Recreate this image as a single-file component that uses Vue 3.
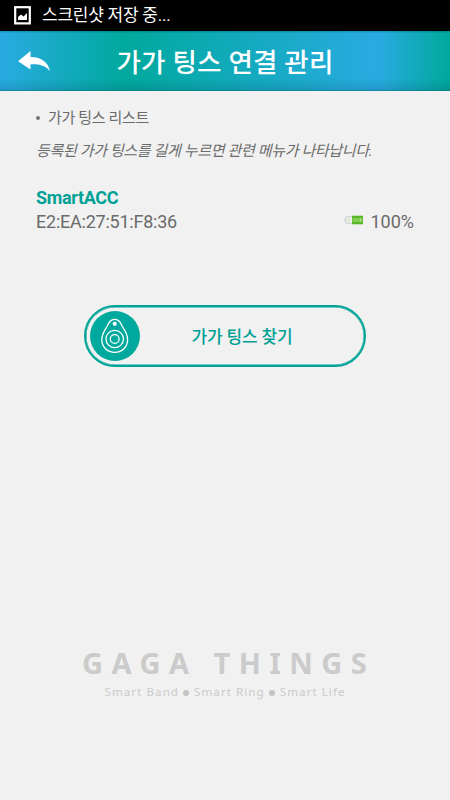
<script setup>
import { ref } from 'vue'

const devices = ref([
  { name: 'SmartACC', mac: 'E2:EA:27:51:F8:36', battery: 100 },
])
</script>

<template>
  <div class="screen">
    <div class="status-bar">
      <svg class="shot-icon" viewBox="0 0 18 19">
        <rect x="1.2" y="1.2" width="14.6" height="16.2" fill="none" stroke="#fff" stroke-width="2.2" />
        <path d="M4 14V11L7 8.5L9.5 10.5L13 7V14Z" fill="#fff" />
      </svg>
      <span class="status-text">스크린샷 저장 중...</span>
    </div>
    <header class="header">
      <button class="back">
        <svg viewBox="0 0 32 20">
          <path d="M0 10.2L12.5 0V6C22.5 6 30 10.5 32 20C27 14.4 21 13 12.5 13.4V18.6Z" fill="#fff" />
        </svg>
      </button>
      <h1 class="title">가가 팅스 연결 관리</h1>
    </header>
    <main class="content">
      <p class="list-title"><span class="bullet"></span>가가 팅스 리스트</p>
      <p class="hint">등록된 가가 팅스를 길게 누르면 관련 메뉴가 나타납니다.</p>
      <div v-for="d in devices" :key="d.mac" class="device">
        <div class="device-name">{{ d.name }}</div>
        <div class="device-row">
          <span class="mac">{{ d.mac }}</span>
          <svg class="battery" viewBox="0 0 20 10">
            <rect x="0" y="3.5" width="2" height="3" fill="#dadada" />
            <rect x="1.5" y="1" width="7" height="8" fill="#d6d8d4" />
            <rect x="2.5" y="2.5" width="5.5" height="5" fill="#eef2eb" />
            <rect x="4" y="4" width="1.5" height="2" fill="#b4dfa6" />
            <rect x="8" y="0.7" width="11" height="8.6" fill="#58b82a" />
            <rect x="8.5" y="3" width="10" height="4" fill="#83cd50" />
            <rect x="16" y="3" width="1" height="4" fill="#a7de80" />
          </svg>
          <span class="percent">{{ d.battery }}%</span>
        </div>
      </div>
      <button class="find">
        <span class="find-icon">
          <svg viewBox="0 0 50 50" fill="none" stroke="#fff">
            <path d="M24.7 8.3C20.5 8.3 19 11.5 17 15.5C14.5 20 11.8 23 11.8 28.4C11.8 36 17.3 41.3 24.7 41.3S37.6 36 37.6 28.4C37.6 23 34.9 20 32.4 15.5C30.4 11.5 28.9 8.3 24.7 8.3Z" stroke-width="1.3" />
            <circle cx="24.7" cy="28" r="8.7" stroke-width="1.3" />
            <circle cx="24.7" cy="28" r="4.4" stroke-width="1.3" />
            <circle cx="24.7" cy="12.8" r="2.1" fill="#fff" stroke="none" />
          </svg>
        </span>
        <span class="find-label">가가 팅스 찾기</span>
      </button>
    </main>
    <footer class="brand">
      <div class="brand-name">GAGA THINGS</div>
      <div class="brand-sub">
        <span>Smart Band</span><i class="dot"></i><span>Smart Ring</span><i class="dot"></i><span>Smart Life</span>
      </div>
    </footer>
  </div>
</template>

<style>
body {
  margin: 0;
  background: #f1f1f1;
}
</style>

<style scoped>
.screen {
  width: 450px;
  height: 800px;
  display: flex;
  flex-direction: column;
  overflow: hidden;
  background: #f1f1f1;
  color: #6b6b6b;
  font-family: Roboto, "Noto Sans CJK KR", sans-serif;
  white-space: nowrap;
}
.status-bar {
  height: 31px;
  box-sizing: border-box;
  padding-left: 14px;
  display: flex;
  align-items: center;
  background: #000;
}
.shot-icon {
  width: 18px;
  height: 19px;
  margin-right: 10px;
}
.status-text {
  color: #fff;
  font-size: 17px;
  line-height: 30px;
  letter-spacing: -0.25px;
  padding-bottom: 1px;
}
.header {
  height: 60px;
  box-sizing: border-box;
  display: flex;
  align-items: center;
  padding: 0 18px;
  background:
    linear-gradient(rgba(0, 70, 90, 0.3), transparent 4%, transparent 78%, rgba(0, 70, 90, 0.16) 97%, rgba(0, 70, 90, 0.4)),
    linear-gradient(90deg, #29abe2 0, #00a99d 125px, #29abe2 378px, #00a99d 448px);
}
.back {
  width: 32px;
  padding: 0;
  border: none;
  background: none;
}
.back svg {
  display: block;
  width: 32px;
  height: 20px;
}
.title {
  flex: 1;
  margin: 0 32px 0 0;
  padding-top: 4px;
  color: #fff;
  font-size: 26.5px;
  font-weight: 500;
  line-height: 60px;
  letter-spacing: 0.2px;
  text-align: center;
}
.content {
  display: flex;
  flex-direction: column;
  padding: 15px 36px 0;
}
.list-title {
  display: flex;
  align-items: center;
  margin: 0;
  font-size: 15px;
  line-height: 24px;
  letter-spacing: -0.35px;
}
.bullet {
  width: 4px;
  height: 4px;
  margin: 0 8px 1px 0;
  border-radius: 50%;
  background: #777;
}
.hint {
  margin: 9px 0 0;
  font-size: 15px;
  font-style: italic;
  line-height: 24px;
  letter-spacing: -0.35px;
}
.device {
  margin-top: 23px;
}
.device-name {
  color: #00a195;
  font-size: 18px;
  font-weight: 700;
  line-height: 23px;
  letter-spacing: -0.35px;
}
.device-row {
  display: flex;
  align-items: center;
  font-size: 18px;
  line-height: 25px;
}
.mac {
  flex: 1;
  letter-spacing: -0.23px;
}
.battery {
  width: 20px;
  height: 10px;
  margin: 0 6px 4px 0;
}
.find {
  width: 282px;
  height: 62px;
  margin: 71px auto 0 48px;
  padding: 0 0 0 4px;
  display: flex;
  align-items: center;
  border: 2px solid #00a598;
  border-radius: 31px;
  box-shadow: inset 0 0 0 0.5px #00a598;
  background: none;
  font-family: inherit;
}
.find-icon {
  width: 50px;
  height: 50px;
  border-radius: 50%;
  background: #00a99d;
}
.find-icon svg {
  display: block;
}
.find-label {
  flex: 1;
  padding: 2px 20px 0 0;
  color: #00a195;
  font-size: 17px;
  font-weight: 500;
  line-height: 24px;
  letter-spacing: -0.15px;
  text-align: center;
}
.brand {
  margin: auto 0 99px;
  padding-left: 82px;
  color: #cbcbcb;
  font-family: "Noto Sans", sans-serif;
}
.brand-name {
  font-size: 29px;
  font-weight: 700;
  line-height: 36px;
  letter-spacing: 8.5px;
}
.brand-sub {
  display: flex;
  align-items: center;
  padding-left: 22.5px;
  margin-top: 2px;
  font-size: 11.6px;
  line-height: 18px;
  letter-spacing: 1.05px;
}
.dot {
  width: 6px;
  height: 6px;
  margin: 1px 5px 0 4px;
  border-radius: 50%;
  background: #c4c4c4;
}
</style>
